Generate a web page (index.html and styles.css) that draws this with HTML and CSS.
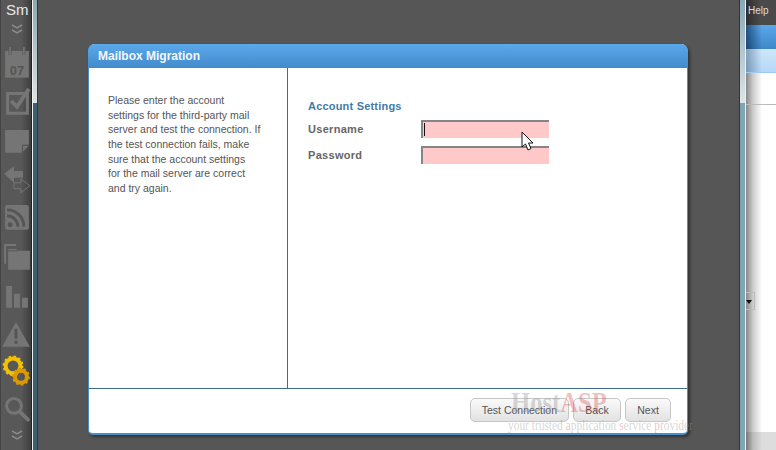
FILE: index.html
```html
<!DOCTYPE html>
<html lang="en">
<head>
<meta charset="utf-8">
<title>Mailbox Migration</title>
<link rel="stylesheet" href="styles.css">
</head>
<body>
<div class="screen">
  <aside class="rail">
    <div class="rail-title">Sm</div>
    <svg class="chev" width="31" height="14" viewBox="0 0 31 14"><path d="M12 3l5 3 5-3M12 8l5 3 5-3" fill="none" stroke="#8a8a8a" stroke-width="1.5"/></svg>
    <svg class="ico" width="31" height="39" viewBox="0 0 31 39"><path d="M5 7h24v27H5z" fill="#757575"/><path d="M10 3v8M24 3v8" stroke="#555" stroke-width="3"/><path d="M10 3v8M24 3v8" stroke="#8a8a8a" stroke-width="1"/><text x="17" y="31" class="cal">07</text></svg>
    <svg class="ico" width="31" height="39" viewBox="0 0 31 39"><path d="M7.500 8.500h20v20h-20z" transform="translate(0 2)" fill="none" stroke="#757575" stroke-width="3"/><path d="M11 18l6 6L29 6" fill="none" stroke="#757575" stroke-width="4"/></svg>
    <svg class="ico" width="31" height="39" viewBox="0 0 31 39"><path d="M5 9h24v15h-7v8H5z" fill="#757575"/><path d="M23 25h6l-6 6z" fill="#757575"/></svg>
    <svg class="ico" width="31" height="39" viewBox="0 0 31 39"><path d="M4 14l10-8v5h9v7h-9v5z" fill="#757575"/><path d="M30 26l-9-7v4h-7v6h7v4z" fill="none" stroke="#757575" stroke-width="1"/></svg>
    <svg class="ico" width="31" height="39" viewBox="0 0 31 39"><rect x="5" y="7" width="24" height="25" rx="2" fill="#757575"/><circle cx="10" cy="27" r="2.500" fill="#555"/><path d="M7 18a11 11 0 0 1 11 11M7 12a17 17 0 0 1 17 17" fill="none" stroke="#555" stroke-width="3"/></svg>
    <svg class="ico" width="31" height="39" viewBox="0 0 31 39"><path d="M4 7h12v2H6v18H4z" fill="#757575"/><path d="M8 12h8l2 2h12v19H8z" fill="#757575"/><path d="M8 14h10" stroke="#555"/></svg>
    <svg class="ico" width="31" height="39" viewBox="0 0 31 39"><path d="M6 10h6v22H6zM14 18h6v14h-6zM22 22h6v10h-6z" fill="#757575"/></svg>
    <svg class="ico" width="31" height="39" viewBox="0 0 31 39"><path d="M16 8l14 25H2z" fill="#757575"/><path d="M16 15v10M16 27v3" stroke="#555" stroke-width="3"/></svg>
    <svg class="ico" width="31" height="39" viewBox="0 0 31 39">
      <circle cx="13" cy="13" r="7.500" fill="none" stroke="#f2c200" stroke-width="4"/>
      <circle cx="13" cy="13" r="9.500" fill="none" stroke="#f2c200" stroke-width="2" stroke-dasharray="2.500 2.500"/>
      <circle cx="21" cy="24" r="6" fill="none" stroke="#dc9a00" stroke-width="4"/>
      <circle cx="21" cy="24" r="8" fill="none" stroke="#dc9a00" stroke-width="2" stroke-dasharray="2.500 2.500"/>
    </svg>
    <svg class="ico" width="31" height="39" viewBox="0 0 31 39"><circle cx="14" cy="15" r="7.500" fill="none" stroke="#757575" stroke-width="3"/><path d="M20 21l8 8" stroke="#757575" stroke-width="4" stroke-linecap="round"/></svg>
    <svg class="chev" width="31" height="14" viewBox="0 0 31 14"><path d="M12 3l5 3 5-3M12 8l5 3 5-3" fill="none" stroke="#8a8a8a" stroke-width="1.5"/></svg>
  </aside>

  <div class="bar bar-left"><div class="thumb-left"></div></div>

  <main class="stage">
    <section class="dialog">
      <header class="dialog-head">Mailbox Migration</header>
      <div class="dialog-body">
        <div class="intro">
          <p>Please enter the account<br>settings for the third-party mail<br>server and test the connection. If<br>the test connection fails, make<br>sure that the account settings<br>for the mail server are correct<br>and try again.</p>
        </div>
        <form class="settings">
          <h2 class="settings-title">Account Settings</h2>
          <div class="field">
            <label class="field-label">Username</label>
            <div class="field-input"><span class="caret"></span></div>
          </div>
          <div class="field">
            <label class="field-label">Password</label>
            <div class="field-input"></div>
          </div>
        </form>
      </div>
      <footer class="dialog-foot">
        <span class="btn">Test Connection</span>
        <span class="btn btn-back">Back</span>
        <span class="btn btn-next">Next</span>
      </footer>
      <div class="watermark">
        <div class="wm-big">Host<b>ASP</b></div>
        <div class="wm-small">your trusted <b>a</b>pplication <b>s</b>ervice <b>p</b>rovider</div>
      </div>
      <svg class="pointer" width="14" height="21" viewBox="0 0 14 21"><path d="M1 1v15l3.500-3 2.500 6 3-1.500-2.500-5.500H12z" fill="#fff" stroke="#111" stroke-width="1"/></svg>
    </section>
  </main>

  <div class="bar bar-right"><div class="thumb-right"></div></div>

  <aside class="pane">
    <div class="pane-top">Help</div>
    <div class="pane-blue"></div>
    <div class="pane-light"></div>
    <div class="pane-row"></div>
    <div class="pane-content"><div class="pane-select"><span class="arrow"></span></div></div>
    <div class="pane-foot"></div>
  </aside>
</div>
</body>
</html>
```
FILE: styles.css
```css
html, body {
  margin: 0;
  padding: 0;
  background: #565656;
}
.screen {
  display: flex;
  width: 776px;
  height: 450px;
  overflow: hidden;
  font-family: "Liberation Sans", Arial, sans-serif;
}
.rail {
  width: 31px;
  flex: none;
  display: flex;
  flex-direction: column;
  overflow: hidden;
  box-sizing: border-box;
  border-left: 1px solid #444;
  background: linear-gradient(90deg, #585858 0, #585858 20px, #3c3c3c 31px);
}
.rail svg { display: block; flex: none; margin-left: -1px; }
.rail-title {
  height: 24px;
  padding: 1px 0 0 5px;
  box-sizing: border-box;
  color: #e8e8e8;
  font-size: 15px;
  line-height: 18px;
  white-space: nowrap;
}
.rail .chev { margin-top: 1px; margin-bottom: 8px; }
.rail .ico { height: 38.6px; }
.rail .ico + .chev { margin-top: -2px; }
.cal {
  font-family: "Liberation Sans", Arial, sans-serif;
  font-size: 13px;
  font-weight: 700;
  fill: #555;
  text-anchor: middle;
}
.bar {
  flex: none;
  width: 7px;
  box-sizing: border-box;
}
.bar-left {
  border-left: 1px solid #222;
  box-shadow: inset 1px 0 0 #eef2f3, inset -1px 0 0 #2b3b44;
  background: #3d5f6f;
}
.thumb-left {
  height: 103px;
  background: linear-gradient(#8ea8b0, #dfe4e6);
  box-shadow: inset 1px 0 0 #eef2f3, inset -1px 0 0 #2b3b44;
}
.stage {
  flex: none;
  width: 701px;
  padding: 44px 0 0 50px;
  box-sizing: border-box;
  background: #565656;
}
.dialog {
  position: relative;
  width: 600px;
  height: 391px;
  display: flex;
  flex-direction: column;
  box-sizing: border-box;
  background: #fff;
  border-radius: 7px 7px 5px 5px;
  border: solid #4a8fcc;
  border-width: 0 1px 2px 1px;
  box-shadow: 2px 2px 3px #333;
}
.dialog-head {
  height: 24px;
  flex: none;
  margin: 0 -1px;
  padding-left: 10px;
  border-radius: 7px 7px 0 0;
  background: linear-gradient(#5ba8ea, #428bcc);
  color: #f2f6fb;
  font-size: 12px;
  font-weight: 700;
  line-height: 25px;
}
.dialog-body {
  flex: none;
  height: 320px;
  display: flex;
  border-bottom: 1px solid #3e6c8d;
}
.intro {
  width: 199px;
  flex: none;
  box-sizing: border-box;
  border-right: 1px solid #3e6c8d;
  padding: 25px 0 0 19px;
}
.intro p {
  margin: 0;
  color: #555;
  font-size: 10.5px;
  line-height: 14.67px;
  white-space: nowrap;
}
.settings {
  flex: 1;
  padding: 31px 0 0 20px;
}
.settings-title {
  margin: 0 0 7px;
  color: #3f7ca6;
  font-size: 11px;
  font-weight: 700;
  line-height: 14px;
  letter-spacing: 0.2px;
}
.field {
  display: flex;
  align-items: center;
  height: 18px;
  margin-bottom: 8px;
}
.field-label {
  width: 113px;
  color: #666;
  font-size: 11px;
  font-weight: 700;
  letter-spacing: 0.3px;
}
.field-input {
  width: 128px;
  height: 18px;
  box-sizing: border-box;
  background: #ffc9c9;
  border-top: 2px solid #858585;
  border-left: 2px solid #858585;
  position: relative;
}
.caret {
  position: absolute;
  left: 1px;
  top: 1px;
  width: 1px;
  height: 13px;
  background: #111;
}
.dialog-foot {
  flex: 1;
  display: flex;
  justify-content: flex-end;
  gap: 4px;
  padding: 9px 16px 0 0;
}
.btn {
  height: 24px;
  box-sizing: border-box;
  padding: 0 11px;
  border: 1px solid #c6c6c6;
  border-radius: 5px;
  background: linear-gradient(#fafafa, #e2e2e2);
  color: #555;
  font-size: 10.5px;
  line-height: 23px;
  white-space: nowrap;
}
.btn-back { width: 48px; padding: 0; text-align: center; }
.btn-next { width: 46px; padding: 0; text-align: center; }
.watermark {
  position: absolute;
  left: 419px;
  top: 342px;
  width: 180px;
  pointer-events: none;
  color: rgba(150, 150, 150, 0.4);
  font-family: "Liberation Serif", "Times New Roman", serif;
  white-space: nowrap;
}
.watermark b { color: rgba(215, 70, 70, 0.35); font-weight: 400; }
.wm-big {
  margin-left: 3px;
  font-size: 29px;
  font-weight: 700;
  line-height: 32px;
  transform: scaleX(0.85);
  transform-origin: left;
}
.wm-big b { font-weight: 700; }
.wm-small {
  font-size: 15px;
  line-height: 15px;
  transform: scaleX(0.76);
  transform-origin: left;
}
.pointer {
  position: absolute;
  left: 432px;
  top: 87px;
}
.bar-right {
  width: 7px;
  background: #7fa5b5;
  border-left: 1px solid #333;
  border-right: 1px solid #f0f0f0;
}
.thumb-right {
  height: 103px;
  background: linear-gradient(#88a8b6, #dde5e8);
}
.pane {
  flex: none;
  width: 30px;
  display: flex;
  flex-direction: column;
  background: #fff;
}
.pane-top {
  height: 25px;
  flex: none;
  box-sizing: border-box;
  padding: 4px 0 0 2px;
  background: linear-gradient(90deg, #2e2e2e, #4a4a4a 14px);
  color: #ddd;
  font-size: 10px;
  line-height: 13px;
}
.pane-blue {
  height: 24px;
  flex: none;
  background: linear-gradient(90deg, rgba(0, 30, 60, 0.6), transparent 16px), linear-gradient(#5aa7ea, #3f88c8);
}
.pane-light {
  height: 23px;
  flex: none;
  background: linear-gradient(90deg, rgba(0, 30, 60, 0.35), transparent 16px), linear-gradient(#cfe6fb, #b5d8f8);
  border-bottom: 1px solid #9ccaf2;
}
.pane-row {
  height: 32px;
  flex: none;
  box-sizing: border-box;
  border-bottom: 1px solid #bbb;
  background: linear-gradient(90deg, #888, #ccc 7px, #fff 16px);
}
.pane-content {
  flex: 1;
  box-sizing: border-box;
  padding-top: 187px;
  background: linear-gradient(90deg, #888, #ccc 7px, #fff 16px);
}
.pane-select {
  width: 9px;
  height: 18px;
  box-sizing: border-box;
  border: 1px solid #bbb;
  border-left: 0;
  position: relative;
}
.arrow {
  position: absolute;
  left: 0;
  top: 7px;
  border: 3px solid transparent;
  border-top: 4px solid #111;
  border-bottom: 0;
}
.pane-foot {
  height: 18px;
  flex: none;
  background: linear-gradient(90deg, #777, #bbb 7px, #ddd 16px);
}
```
